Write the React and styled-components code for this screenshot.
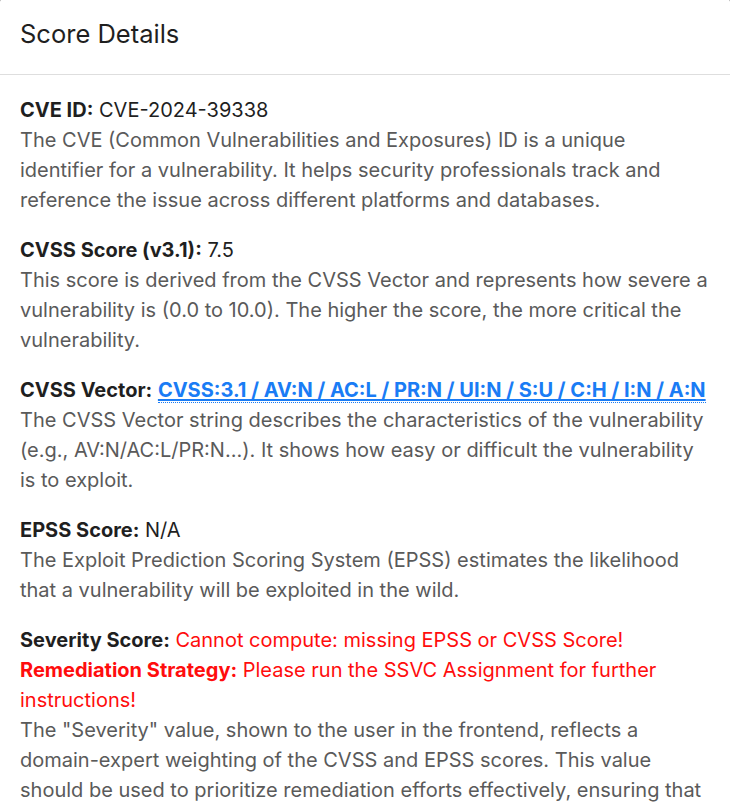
import React from "react";
import styled, { createGlobalStyle } from "styled-components";

const GlobalStyle = createGlobalStyle`
  html, body {
    margin: 0;
    padding: 0;
    background: #6f6f6f;
    overflow: hidden;
  }
  body {
    font-family: Inter, "Noto Sans", "Liberation Sans", sans-serif;
  }
`;

const Modal = styled.div`
  margin: -7px -2px 0;
  background: #fff;
  border-radius: 16px;
  min-height: 830px;
  overflow: hidden;
`;

const Header = styled.div`
  height: 82px;
  display: flex;
  align-items: center;
  padding: 0 22px;
  box-sizing: border-box;
  border-bottom: 1px solid #dedede;
`;

const Title = styled.h2`
  margin: 0;
  font-size: 25.5px;
  font-weight: 400;
  color: #1f1f1f;
`;

const Body = styled.div`
  padding: 20px 22px 0;
`;

const Section = styled.div`
  margin-bottom: 20px;
  font-size: 20px;
  line-height: 30px;
  color: #5a5a5a;
`;

const Line = styled.div`
  color: ${props => (props.$danger ? "#ff0d0d" : "#1f1f1f")};
`;

const Label = styled.span`
  font-weight: 700;
  color: ${props => (props.$danger ? "#ff0d0d" : "#1f1f1f")};
`;

const Danger = styled.span`
  color: #ff0d0d;
`;

const VectorLink = styled.a`
  color: #1a7cf5;
  font-weight: 700;
  text-decoration: underline;
  text-underline-offset: 2px;
  border-bottom: 1px dotted #1a7cf5;
  cursor: pointer;
`;

const Desc = styled.div``;

const sections = [
  {
    label: "CVE ID:",
    value: "CVE-2024-39338",
    desc:
      "The CVE (Common Vulnerabilities and Exposures) ID is a unique identifier for a vulnerability. It helps security professionals track and reference the issue across different platforms and databases."
  },
  {
    label: "CVSS Score (v3.1):",
    value: "7.5",
    desc:
      "This score is derived from the CVSS Vector and represents how severe a vulnerability is (0.0 to 10.0). The higher the score, the more critical the vulnerability."
  },
  {
    label: "CVSS Vector:",
    link: "CVSS:3.1 / AV:N / AC:L / PR:N / UI:N / S:U / C:H / I:N / A:N",
    desc:
      "The CVSS Vector string describes the characteristics of the vulnerability (e.g., AV:N/AC:L/PR:N...). It shows how easy or difficult the vulnerability is to exploit."
  },
  {
    label: "EPSS Score:",
    value: "N/A",
    desc:
      "The Exploit Prediction Scoring System (EPSS) estimates the likelihood that a vulnerability will be exploited in the wild."
  }
];

export default function App() {
  return (
    <>
      <GlobalStyle />
      <Modal>
        <Header>
          <Title>Score Details</Title>
        </Header>
        <Body>
          {sections.map(s => (
            <Section key={s.label}>
              <Line>
                <Label>{s.label}</Label>{" "}
                {s.link ? <VectorLink>{s.link}</VectorLink> : s.value}
              </Line>
              <Desc>{s.desc}</Desc>
            </Section>
          ))}
          <Section>
            <Line>
              <Label>Severity Score:</Label>{" "}
              <Danger>Cannot compute: missing EPSS or CVSS Score!</Danger>
            </Line>
            <Line $danger>
              <Label $danger>Remediation Strategy:</Label> Please run the SSVC
              Assignment for further instructions!
            </Line>
            <Desc>
              The "Severity" value, shown to the user in the frontend, reflects
              a domain-expert weighting of the CVSS and EPSS scores. This value
              should be used to prioritize remediation efforts effectively,
              ensuring that the most critical vulnerabilities are addressed
              first.
            </Desc>
          </Section>
        </Body>
      </Modal>
    </>
  );
}
